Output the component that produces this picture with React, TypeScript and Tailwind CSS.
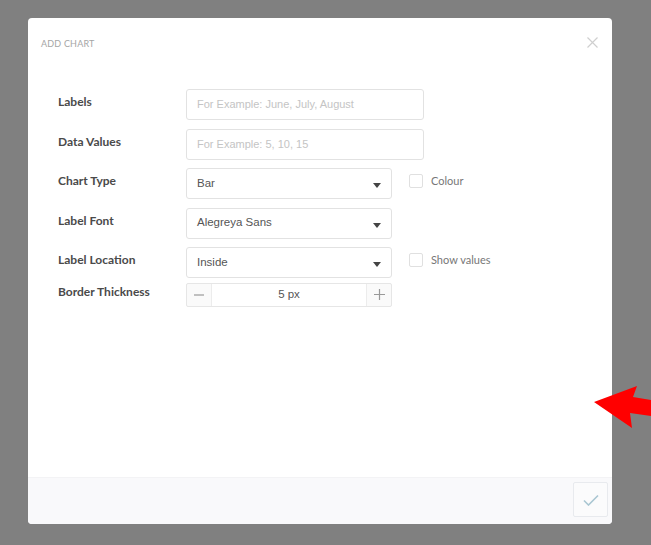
import React from 'react';

const labelCls = 'w-[128px] shrink-0 pb-[5px] text-[12px] font-bold text-[#4a4a4a] font-["Lato",sans-serif]';

const Caret = () => (
  <svg width="8" height="5" viewBox="0 0 8 5" className="absolute right-[10px] top-[14px]">
    <path d="M0 0 H8 L4 5 Z" fill="#444" />
  </svg>
);

const Select: React.FC<{ value: string }> = ({ value }) => (
  <div className="relative w-[206px] h-[31px] border border-[#e2e2e2] rounded-[3px] bg-white flex items-center pl-[10px] text-[11.5px] text-[#555] font-['Liberation_Sans',sans-serif]">
    {value}
    <Caret />
  </div>
);

const Check: React.FC<{ label: string }> = ({ label }) => (
  <div className="flex items-center ml-[17px] pb-[5px] gap-[8px]">
    <div className="w-[14px] h-[14px] border border-[#e0e0e0] rounded-[2px] bg-white" />
    <span className="text-[11px] text-[#777] font-['Lato',sans-serif]">{label}</span>
  </div>
);

export default function App() {
  return (
    <div className="relative w-[651px] h-[545px] bg-[#808080] pt-[18px] pl-[28px] overflow-hidden">
      <div className="w-[584px] h-[506px] bg-white rounded-[4px] flex flex-col">
        <div className="flex items-center justify-between pl-[13px] pr-[14px] h-[52px]">
          <span className="text-[9px] text-[#a5a5a5] font-['Lato',sans-serif] tracking-[0.2px]">ADD CHART</span>
          <svg width="11" height="11" viewBox="0 0 11 11" className="mb-[4px]">
            <path d="M0.5 0.5 L10.5 10.5 M10.5 0.5 L0.5 10.5" stroke="#cfcfcf" strokeWidth="1.2" />
          </svg>
        </div>

        <div className="flex-1 flex flex-col pl-[30px] pt-[19px] gap-[8.5px]">
          <div className="flex items-center">
            <span className={labelCls}>Labels</span>
            <div className="w-[238px] h-[31px] border border-[#e2e2e2] rounded-[3px] flex items-center pl-[10px] text-[11px] text-[#c4c4c4] font-['Liberation_Sans',sans-serif]">
              For Example: June, July, August
            </div>
          </div>
          <div className="flex items-center">
            <span className={labelCls}>Data Values</span>
            <div className="w-[238px] h-[31px] border border-[#e2e2e2] rounded-[3px] flex items-center pl-[10px] text-[11px] text-[#c4c4c4] font-['Liberation_Sans',sans-serif]">
              For Example: 5, 10, 15
            </div>
          </div>
          <div className="flex items-center">
            <span className={labelCls}>Chart Type</span>
            <Select value="Bar" />
            <Check label="Colour" />
          </div>
          <div className="flex items-center">
            <span className={labelCls}>Label Font</span>
            <Select value="Alegreya Sans" />
          </div>
          <div className="flex items-center">
            <span className={labelCls}>Label Location</span>
            <Select value="Inside" />
            <Check label="Show values" />
          </div>
          <div className="flex items-center -mt-[4px]">
            <span className={labelCls}>Border Thickness</span>
            <div className="w-[206px] h-[24px] border border-[#e6e6e6] rounded-[2px] flex items-stretch bg-[#fafafa] text-[#888]">
              <div className="w-[24px] flex items-center justify-center">
                <svg width="10" height="10" viewBox="0 0 10 10"><path d="M0 5 H10" stroke="#999" strokeWidth="1.2" /></svg>
              </div>
              <div className="flex-1 bg-white border-x border-[#ececec] flex items-center justify-center text-[11.5px] text-[#555] font-['Liberation_Sans',sans-serif]">
                5 px
              </div>
              <div className="w-[24px] flex items-center justify-center">
                <svg width="11" height="11" viewBox="0 0 11 11"><path d="M0 5.5 H11 M5.5 0 V11" stroke="#999" strokeWidth="1.2" /></svg>
              </div>
            </div>
          </div>
        </div>

        <div className="h-[47px] bg-[#f9f9fb] border-t border-[#f3f3f5] rounded-b-[4px] flex justify-end pt-[4px] pr-[4px]">
          <div className="w-[35px] h-[35px] border border-[#e8eaee] rounded-[2px] bg-[#fbfbfc] flex items-center justify-center">
            <svg width="16" height="12" viewBox="0 0 16 12">
              <path d="M1 6.5 L5.5 11 L15 1.5" fill="none" stroke="#a9c6d2" strokeWidth="1.6" />
            </svg>
          </div>
        </div>
      </div>

      <svg width="61" height="52" viewBox="0 0 61 52" className="absolute left-[590px] top-[380px]">
        <polygon points="4,22 47,6 43,17 61,20 61,36 40,33 42,48" fill="#ff0000" />
      </svg>
    </div>
  );
}
